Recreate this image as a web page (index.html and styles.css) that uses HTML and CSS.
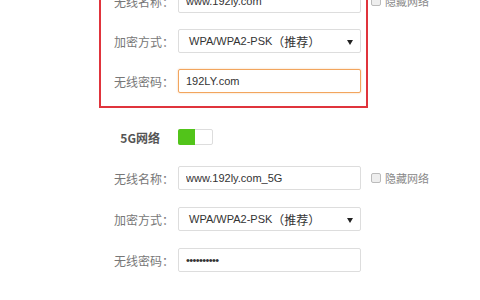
FILE: index.html
```html
<!DOCTYPE html>
<html lang="zh-CN">
<head>
  <meta charset="UTF-8">
  <title>无线设置</title>
  <link rel="stylesheet" href="styles.css">
</head>
<body>
  <div class="page">
    <div class="group">
      <div class="row">
        <label class="label">无线名称：</label>
        <input class="field" type="text" value="www.192ly.com">
        <label class="hide"><span class="box"></span>隐藏网络</label>
      </div>
      <div class="row">
        <label class="label">加密方式：</label>
        <div class="field select">WPA/WPA2-PSK<span class="cn">（推荐）</span></div>
      </div>
      <div class="row">
        <label class="label">无线密码：</label>
        <input class="field focus" type="text" value="192LY.com">
      </div>
      <div class="mark"></div>
    </div>

    <div class="group group-5g">
      <div class="row">
        <span class="label title">5G网络</span>
        <span class="switch"><span class="switch-on"></span></span>
      </div>
      <div class="row">
        <label class="label">无线名称：</label>
        <input class="field" type="text" value="www.192ly.com_5G">
        <label class="hide"><span class="box"></span>隐藏网络</label>
      </div>
      <div class="row">
        <label class="label">加密方式：</label>
        <div class="field select">WPA/WPA2-PSK<span class="cn">（推荐）</span></div>
      </div>
      <div class="row">
        <label class="label">无线密码：</label>
        <input class="field pass" type="password" value="1234567890">
      </div>
    </div>
  </div>
</body>
</html>
```

FILE: styles.css
```css
* { box-sizing: border-box; }
body {
  margin: 0;
  background-color: #fff;
  font-family: "Liberation Sans", "Noto Sans CJK SC", sans-serif;
  color: #666;
  overflow: hidden;
}
.page {
  margin-top: -11px;
}
.group {
  position: relative;
  display: flex;
  flex-direction: column;
  gap: 16px;
}
.group-5g {
  margin-top: 32px;
  gap: 17px;
}
.row {
  display: flex;
  align-items: center;
  height: 24px;
  padding-left: 100px;
}
.label {
  width: 74px;
  margin-right: 4px;
  text-align: right;
  font-family: "Noto Sans CJK SC", sans-serif;
  font-size: 12px;
  color: #777;
}
.title {
  padding-right: 14px;
  font-weight: bold;
  color: #555;
}
.field {
  width: 183px;
  height: 24px;
  padding: 0 7px;
  border: 1px solid #ddd;
  border-radius: 2px;
  background-color: #fff;
  font-family: "Liberation Sans", "Noto Sans CJK SC", sans-serif;
  font-size: 11px;
  color: #333;
  outline: none;
}
.focus {
  border-color: #f2a55e;
  box-shadow: 0 0 2px rgba(242, 165, 94, 0.6);
}
.pass {
  letter-spacing: -0.6px;
}
.select {
  position: relative;
  display: flex;
  align-items: center;
  padding-left: 10px;
}
.select .cn {
  font-family: "Noto Sans CJK SC", sans-serif;
  font-size: 12px;
}
.select::after {
  content: "";
  position: absolute;
  right: 7px;
  top: 10px;
  border-left: 3px solid transparent;
  border-right: 3px solid transparent;
  border-top: 5px solid #222;
}
.hide {
  display: flex;
  align-items: center;
  margin-left: 10px;
  font-family: "Noto Sans CJK SC", sans-serif;
  font-size: 11px;
  color: #888;
}
.box {
  width: 10px;
  height: 10px;
  margin-right: 4px;
  border: 1px solid #bbb;
  border-radius: 2px;
  background-color: #eee;
}
.switch {
  display: flex;
  width: 35px;
  height: 16px;
  border: 1px solid #ddd;
  border-radius: 2px;
  background-color: #fff;
}
.switch-on {
  width: 17px;
  margin: -1px 0 -1px -1px;
  border-radius: 2px 0 0 2px;
  background-color: #52c41a;
}
.mark {
  position: absolute;
  left: 99px;
  top: -30px;
  width: 269px;
  bottom: -15px;
  border: 2px solid #e0343c;
  pointer-events: none;
}
```
